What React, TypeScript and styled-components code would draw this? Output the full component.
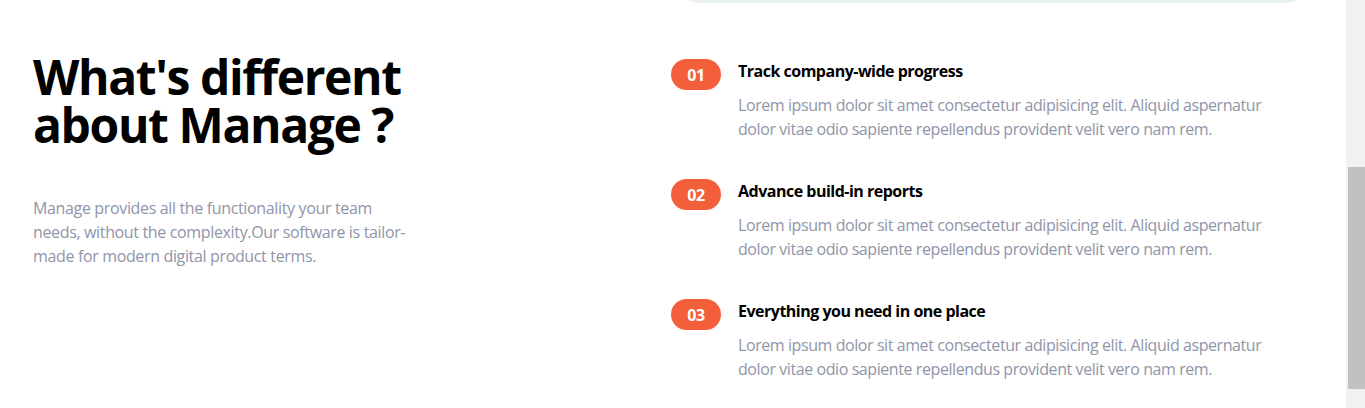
import React from "react";
import styled, { createGlobalStyle } from "styled-components";

const GlobalStyle = createGlobalStyle`
  html, body { margin: 0; padding: 0; background: #ffffff; }
  body { font-family: "Open Sans", "Noto Sans", Arial, sans-serif; }
  #root { height: 408px; overflow: hidden; }
`;

const Page = styled.div`
  display: flex;
  width: 1365px;
  height: 408px;
  overflow: hidden;
  background: #ffffff;
`;

const Main = styled.main`
  flex: 1;
  display: flex;
  flex-direction: column;
  min-width: 0;
`;

const PrevStrip = styled.div`
  display: flex;
  padding-left: 671px;
`;

const PrevCard = styled.div`
  width: 643px;
  height: 60px;
  margin-top: -57px;
  border-radius: 30px;
  background: #e9f1f5;
`;

const Section = styled.section`
  display: grid;
  grid-template-columns: 638px 643px;
  padding: 50px 0 0 33px;
`;

const Intro = styled.div`
  display: flex;
  flex-direction: column;
`;

const Heading = styled.h2`
  margin: 0;
  width: 420px;
  font-size: 48px;
  line-height: 48px;
  font-weight: 700;
  letter-spacing: -1.4px;
  color: #000000;
`;

const Lead = styled.p`
  margin: 47px 0 0;
  width: 378px;
  font-size: 16px;
  line-height: 24px;
  letter-spacing: -0.35px;
  color: #9095a7;
`;

const Features = styled.ol`
  list-style: none;
  margin: 6px 0 0;
  padding: 0;
  display: flex;
  flex-direction: column;
  gap: 38px;
`;

const Feature = styled.li`
  display: flex;
  align-items: flex-start;
  gap: 17px;
`;

const Badge = styled.span`
  flex: 0 0 50px;
  height: 31px;
  border-radius: 16px;
  background: #f25f3a;
  color: #ffffff;
  display: flex;
  align-items: center;
  justify-content: center;
  font-size: 16px;
  font-weight: 700;
  letter-spacing: -0.3px;
`;

const FeatureBody = styled.div`
  display: flex;
  flex-direction: column;
  gap: 10px;
`;

const FeatureTitle = styled.h3`
  margin: 0;
  font-size: 16px;
  line-height: 24px;
  font-weight: 700;
  letter-spacing: -0.5px;
  color: #000000;
`;

const FeatureText = styled.p`
  margin: 0;
  width: 545px;
  font-size: 16px;
  line-height: 24px;
  letter-spacing: -0.42px;
  color: #9095a7;
`;

const ScrollTrack = styled.div`
  flex: 0 0 19px;
  height: 408px;
  background: #f1f1f1;
  padding-left: 2px;
  box-sizing: border-box;
`;

const ScrollThumb = styled.div`
  margin-top: 167px;
  height: 222px;
  background: #c1c1c1;
`;

const features = [
  { n: "01", title: "Track company-wide progress" },
  { n: "02", title: "Advance build-in reports" },
  { n: "03", title: "Everything you need in one place" },
];

const lorem =
  "Lorem ipsum dolor sit amet consectetur adipisicing elit. Aliquid aspernatur dolor vitae odio sapiente repellendus provident velit vero nam rem.";

export default function App() {
  return (
    <>
      <GlobalStyle />
      <Page>
        <Main>
          <PrevStrip>
            <PrevCard />
          </PrevStrip>
          <Section>
            <Intro>
              <Heading>What's different about Manage ?</Heading>
              <Lead>
                Manage provides all the functionality your team needs, without the
                complexity.Our software is tailor-made for modern digital product terms.
              </Lead>
            </Intro>
            <Features>
              {features.map((f) => (
                <Feature key={f.n}>
                  <Badge>{f.n}</Badge>
                  <FeatureBody>
                    <FeatureTitle>{f.title}</FeatureTitle>
                    <FeatureText>{lorem}</FeatureText>
                  </FeatureBody>
                </Feature>
              ))}
            </Features>
          </Section>
        </Main>
        <ScrollTrack>
          <ScrollThumb />
        </ScrollTrack>
      </Page>
    </>
  );
}
